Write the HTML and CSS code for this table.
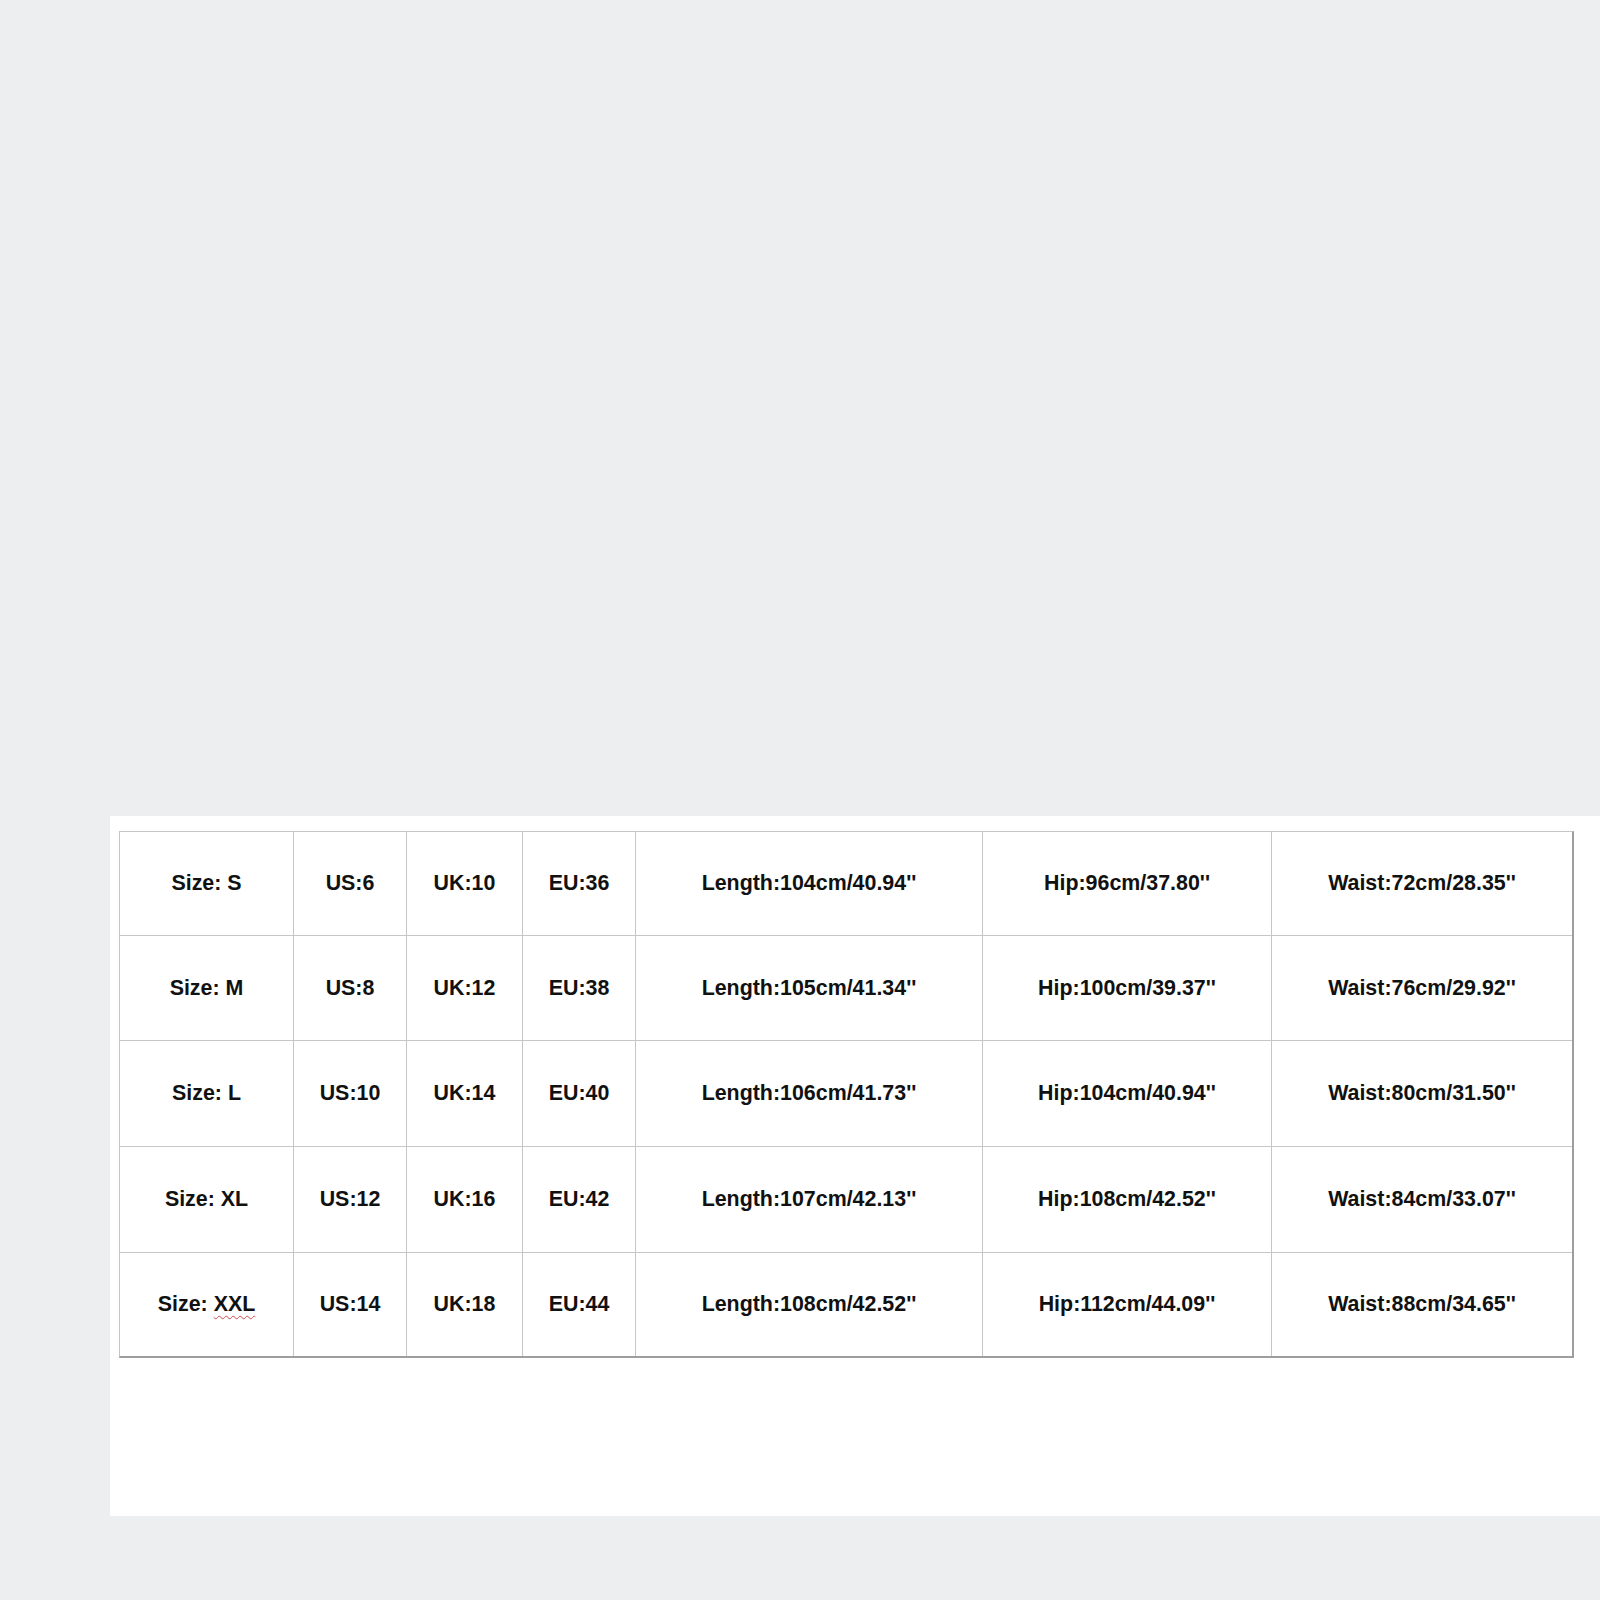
FILE: index.html
```html
<!DOCTYPE html>
<html>
<head>
<meta charset="utf-8">
<link rel="stylesheet" href="styles.css">
</head>
<body>
<div class="panel">
  <div class="chart">
    <div class="cell">Size: S</div><div class="cell">US:6</div><div class="cell">UK:10</div><div class="cell">EU:36</div><div class="cell">Length:104cm/40.94''</div><div class="cell">Hip:96cm/37.80''</div><div class="cell">Waist:72cm/28.35''</div>
    <div class="cell">Size: M</div><div class="cell">US:8</div><div class="cell">UK:12</div><div class="cell">EU:38</div><div class="cell">Length:105cm/41.34''</div><div class="cell">Hip:100cm/39.37''</div><div class="cell">Waist:76cm/29.92''</div>
    <div class="cell">Size: L</div><div class="cell">US:10</div><div class="cell">UK:14</div><div class="cell">EU:40</div><div class="cell">Length:106cm/41.73''</div><div class="cell">Hip:104cm/40.94''</div><div class="cell">Waist:80cm/31.50''</div>
    <div class="cell">Size: XL</div><div class="cell">US:12</div><div class="cell">UK:16</div><div class="cell">EU:42</div><div class="cell">Length:107cm/42.13''</div><div class="cell">Hip:108cm/42.52''</div><div class="cell">Waist:84cm/33.07''</div>
    <div class="cell"><span>Size: <span class="spell">XXL</span></span></div><div class="cell">US:14</div><div class="cell">UK:18</div><div class="cell">EU:44</div><div class="cell">Length:108cm/42.52''</div><div class="cell">Hip:112cm/44.09''</div><div class="cell">Waist:88cm/34.65''</div>
  </div>
</div>
</body>
</html>
```
FILE: styles.css
```css
html, body {
  margin: 0;
  padding: 0;
  background: #edeef0;
}
body {
  width: 1600px;
  height: 1600px;
  padding-top: 816px;
  box-sizing: border-box;
}
.panel {
  margin-left: 110px;
  height: 700px;
  background: #ffffff;
  padding-top: 15px;
  padding-left: 9px;
  box-sizing: border-box;
}
.chart {
  display: grid;
  grid-template-columns: 173px 112px 115px 112px 346px 288px 300px;
  grid-template-rows: 103px 104px 105px 105px 103px;
  gap: 1px;
  width: max-content;
  background: #c6c6c6;
  border: 1px solid #c6c6c6;
  border-right: 2px solid #9e9e9e;
  border-bottom: 2px solid #9e9e9e;
}
.cell {
  background: #ffffff;
  display: flex;
  align-items: center;
  justify-content: center;
  font-family: "Liberation Sans", Arial, sans-serif;
  font-weight: bold;
  font-size: 21.4px;
  color: #111111;
  white-space: nowrap;
}
.spell {
  text-decoration: underline wavy #d04848;
  text-decoration-thickness: 1px;
  text-underline-offset: 4px;
}
```
